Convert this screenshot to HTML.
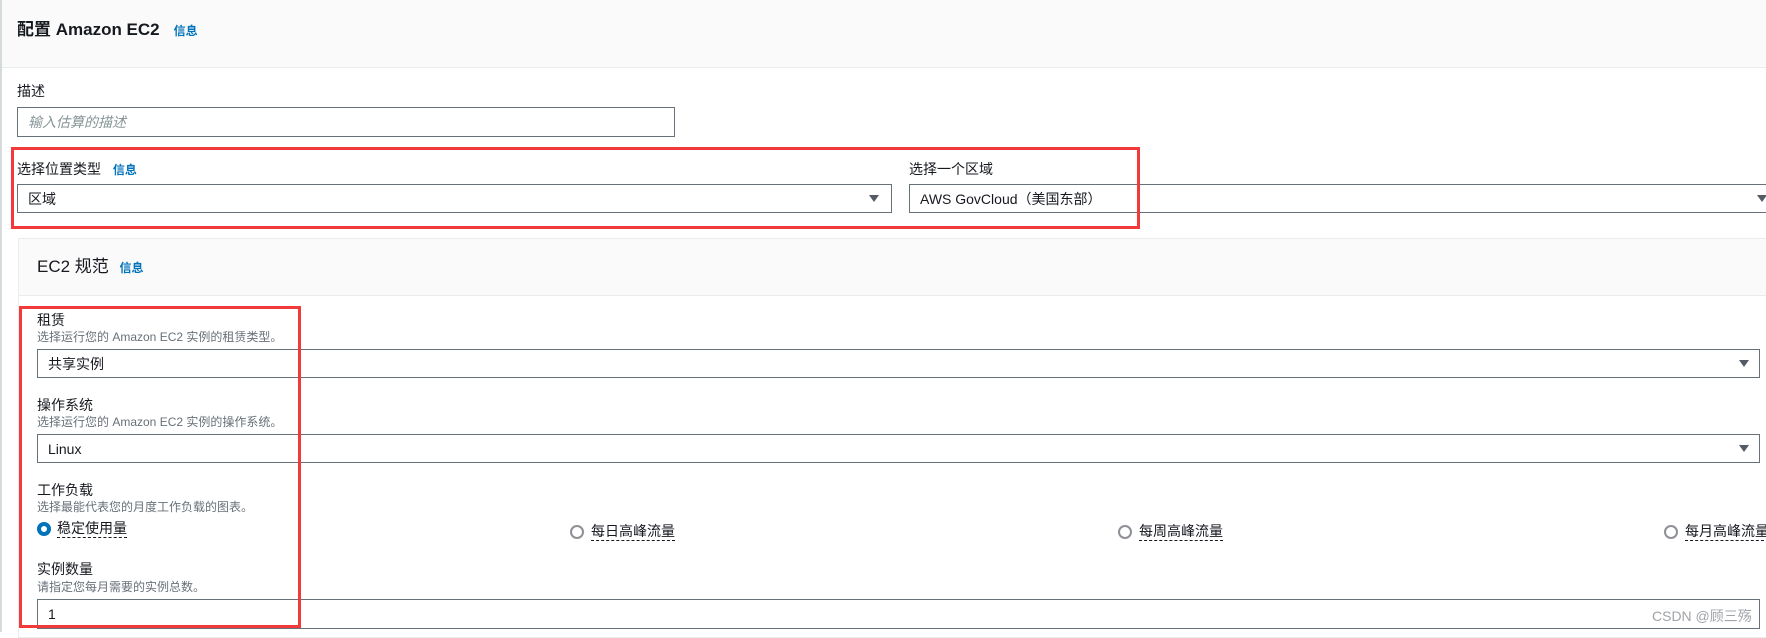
<!DOCTYPE html>
<html><head><meta charset="utf-8"><style>
*{box-sizing:border-box;margin:0;padding:0}
body{width:1766px;height:632px;overflow:hidden;background:#fff;font-family:"Liberation Sans","Noto Sans CJK SC",sans-serif;color:#16191f;position:relative}
.a{position:absolute;white-space:nowrap}
.lbl{font-size:14px;line-height:16px}
.desc{font-size:12px;line-height:14px;color:#687078}
.info{color:#0073bb;font-size:12px;font-weight:bold}
.box{position:absolute;border:1px solid #687078;background:#fff;font-size:14px;padding-left:10px;display:flex;align-items:center}
.arr{position:absolute;width:0;height:0;border-left:5px solid transparent;border-right:5px solid transparent;border-top:7px solid #545b64}
.red{position:absolute;border:3px solid #f23a3a;z-index:10}
.rad{position:absolute;width:14px;height:14px;border-radius:50%;border:2px solid #8d9096;background:#fff}
.rl{font-size:14px;border-bottom:1px dashed #16191f;line-height:17px}
</style></head><body>
<div class="a" style="left:0;top:0;width:2px;height:632px;background:#d5dbdb"></div>
<div class="a" style="left:2px;top:0;width:1764px;height:68px;background:#fafafa;border-bottom:1px solid #eaeded"></div>
<div class="a" style="left:17px;top:19px;font-size:17px;font-weight:bold;line-height:22px">配置 Amazon EC2<span class="info" style="margin-left:14px">信息</span></div>

<div class="a lbl" style="left:17px;top:83px">描述</div>
<div class="box" style="left:17px;top:107px;width:658px;height:30px;color:#879596;font-style:italic">输入估算的描述</div>

<div class="red" style="left:11px;top:147px;width:1129px;height:82px"></div>
<div class="a lbl" style="left:17px;top:161px">选择位置类型 <span class="info" style="margin-left:8px">信息</span></div>
<div class="box" style="left:17px;top:184px;width:875px;height:29px">区域</div>
<div class="arr" style="left:869px;top:195px"></div>
<div class="a lbl" style="left:909px;top:161px">选择一个区域</div>
<div class="box" style="left:909px;top:184px;width:870px;height:29px">AWS GovCloud（美国东部）</div>
<div class="arr" style="left:1757px;top:195px"></div>

<div class="a" style="left:18px;top:238px;width:1760px;height:400px;border:1px solid #eaeded;background:#fff"></div>
<div class="a" style="left:19px;top:239px;width:1760px;height:57px;background:#fafafa;border-bottom:1px solid #eaeded"></div>
<div class="a" style="left:37px;top:256px;font-size:17px;line-height:22px">EC2 规范 <span class="info" style="margin-left:6px">信息</span></div>

<div class="red" style="left:19px;top:306px;width:282px;height:322px"></div>
<div class="a lbl" style="left:37px;top:312px">租赁</div>
<div class="a desc" style="left:37px;top:330px">选择运行您的 Amazon EC2 实例的租赁类型。</div>
<div class="box" style="left:37px;top:349px;width:1723px;height:29px">共享实例</div>
<div class="arr" style="left:1739px;top:360px"></div>

<div class="a lbl" style="left:37px;top:397px">操作系统</div>
<div class="a desc" style="left:37px;top:415px">选择运行您的 Amazon EC2 实例的操作系统。</div>
<div class="box" style="left:37px;top:434px;width:1723px;height:29px">Linux</div>
<div class="arr" style="left:1739px;top:445px"></div>

<div class="a lbl" style="left:37px;top:482px">工作负载</div>
<div class="a desc" style="left:37px;top:500px">选择最能代表您的月度工作负载的图表。</div>
<div class="rad" style="left:37px;top:522px;border:4px solid #0073bb"></div>
<div class="a rl" style="left:57px;top:520px">稳定使用量</div>
<div class="rad" style="left:570px;top:525px"></div>
<div class="a rl" style="left:591px;top:523px">每日高峰流量</div>
<div class="rad" style="left:1118px;top:525px"></div>
<div class="a rl" style="left:1139px;top:523px">每周高峰流量</div>
<div class="rad" style="left:1664px;top:525px"></div>
<div class="a rl" style="left:1685px;top:523px">每月高峰流量</div>

<div class="a lbl" style="left:37px;top:561px">实例数量</div>
<div class="a desc" style="left:37px;top:580px">请指定您每月需要的实例总数。</div>
<div class="box" style="left:37px;top:599px;width:1723px;height:30px">1</div>
<div class="a" style="left:1652px;top:606px;font-size:14px;color:#a0a4a8">CSDN @顾三殇</div>
</body></html>
